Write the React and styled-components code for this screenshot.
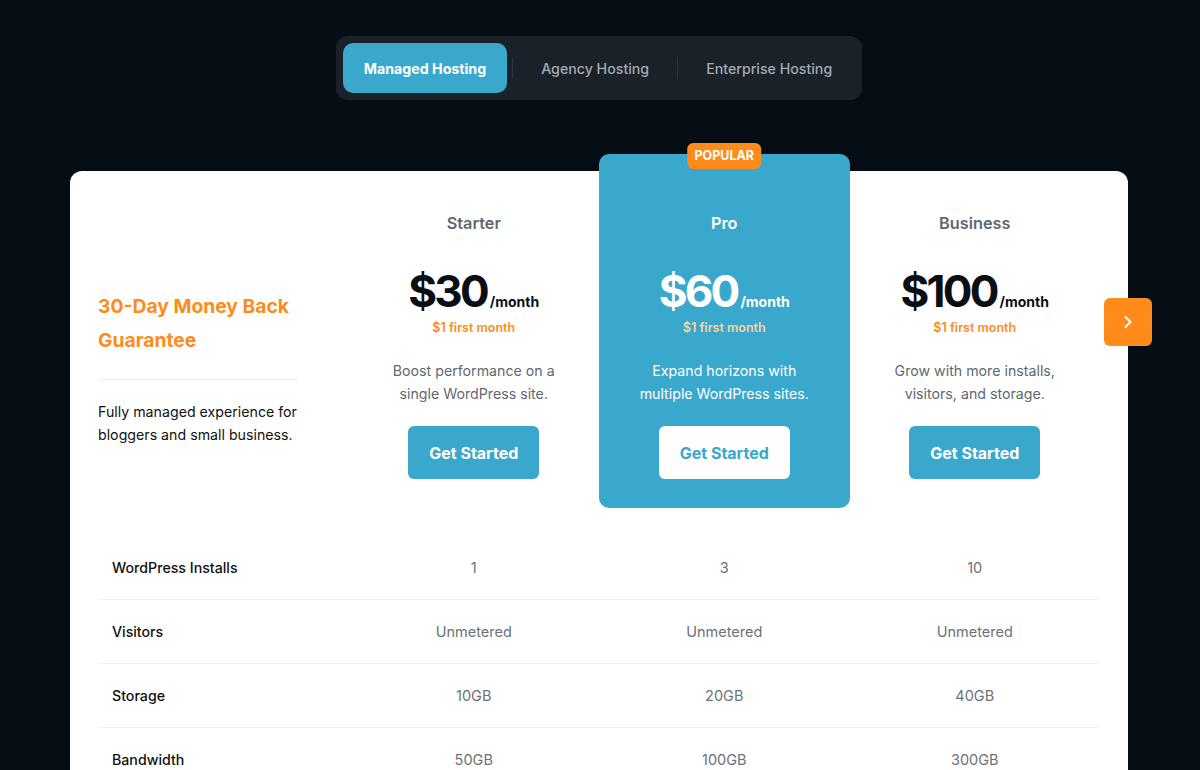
import React from 'react';
import styled, { createGlobalStyle } from 'styled-components';
import { ChevronRight } from 'lucide-react';

const GlobalStyle = createGlobalStyle`
  * { box-sizing: border-box; }
  body {
    margin: 0;
    background: #060e15;
    font-family: Inter, "Noto Sans", sans-serif;
    -webkit-font-smoothing: antialiased;
  }
`;

const Page = styled.div`
  width: 1058px;
  margin-left: 70px;
  padding-top: 36px;
`;

const TabBar = styled.div`
  width: fit-content;
  margin: 0 auto;
  display: flex;
  align-items: center;
  padding: 7px;
  background: #1a2129;
  border-radius: 12px;
`;

const Tab = styled.div`
  height: 50px;
  padding: 0 ${p => (p.$active ? '21px' : '23px')};
  display: flex;
  align-items: center;
  border-radius: 10px;
  font-size: 14.2px;
  font-weight: ${p => (p.$active ? 700 : 500)};
  color: ${p => (p.$active ? '#fff' : '#a3abb3')};
  background: ${p => (p.$active ? '#3aa8cc' : 'transparent')};
`;

const Sep = styled.div`
  width: 1px;
  height: 22px;
  margin: 0 5px;
  background: #2c3540;
`;

const Card = styled.div`
  position: relative;
  margin-top: 71px;
  background: #fff;
  border-radius: 12px;
  padding: 0 28px 40px;
`;

const Header = styled.div`
  display: grid;
  grid-template-columns: repeat(4, 1fr);
`;

const Intro = styled.div`
  padding-top: 118px;
  width: 200px;
`;

const Guarantee = styled.h2`
  margin: 0;
  font-size: 19.3px;
  line-height: 34px;
  font-weight: 700;
  color: #ff8c1a;
`;

const Rule = styled.div`
  height: 1px;
  background: #eeeeee;
  margin: 22px 0 20px;
`;

const IntroText = styled.p`
  margin: 0;
  font-size: 14.2px;
  line-height: 23px;
  color: #111;
  width: 210px;
`;

const Plan = styled.div`
  position: relative;
  display: flex;
  flex-direction: column;
  align-items: center;
  text-align: center;
  padding: 40px 0 29px;
  margin-top: ${p => (p.$featured ? '-17px' : '0')};
  padding-top: ${p => (p.$featured ? '57px' : '40px')};
  background: ${p => (p.$featured ? '#3aa8cc' : 'transparent')};
  border-radius: 10px;
`;

const Badge = styled.div`
  position: absolute;
  top: -11px;
  left: 50%;
  transform: translateX(-50%);
  background: #ff8c1a;
  color: #fff;
  font-size: 12.5px;
  font-weight: 700;
  padding: 0 7px;
  height: 26px;
  line-height: 26px;
  border-radius: 6px;
`;

const PlanName = styled.div`
  font-size: 16.3px;
  line-height: 24px;
  font-weight: 600;
  color: ${p => (p.$featured ? '#fff' : '#5f6870')};
`;

const Price = styled.div`
  margin-top: 34px;
  height: 44px;
  display: flex;
  align-items: baseline;
  color: ${p => (p.$featured ? '#fff' : '#0b0f14')};
`;

const Amount = styled.span`
  font-size: 44px;
  line-height: 44px;
  font-weight: 700;
  letter-spacing: -2.8px;
`;

const Per = styled.span`
  font-size: 14px;
  font-weight: 700;
  margin-left: 3px;
`;

const Promo = styled.div`
  margin-top: 6px;
  font-size: 12.5px;
  line-height: 18px;
  font-weight: 600;
  color: ${p => (p.$featured ? '#fcd2a0' : '#ff8c1a')};
`;

const Desc = styled.p`
  margin: 22px 0 0;
  font-size: 14.2px;
  line-height: 23px;
  color: ${p => (p.$featured ? '#fff' : '#5f6870')};
  width: 200px;
`;

const Button = styled.button`
  margin-top: 21px;
  width: 131px;
  height: 53px;
  border: none;
  border-radius: 6px;
  font-family: inherit;
  font-size: 16px;
  font-weight: 700;
  background: ${p => (p.$featured ? '#fff' : '#3aa8cc')};
  color: ${p => (p.$featured ? '#3aa8cc' : '#fff')};
`;

const NextBtn = styled.div`
  position: absolute;
  top: 127px;
  right: -24px;
  width: 48px;
  height: 48px;
  border-radius: 6px;
  background: #ff8c1a;
  color: #fff;
  display: flex;
  align-items: center;
  justify-content: center;
`;

const Table = styled.div`
  margin-top: 28px;
`;

const Row = styled.div`
  display: grid;
  grid-template-columns: repeat(4, 1fr);
  align-items: center;
  height: 64px;
  border-bottom: 1px solid #f1f1f1;
`;

const Label = styled.div`
  padding-left: 14px;
  font-size: 14.2px;
  font-weight: 500;
  color: #111;
`;

const Value = styled.div`
  text-align: center;
  font-size: 14.5px;
  color: #6b7177;
`;

const plans = [
  { name: 'Starter', price: '$30', desc: 'Boost performance on a single WordPress site.' },
  { name: 'Pro', price: '$60', desc: 'Expand horizons with multiple WordPress sites.', featured: true },
  { name: 'Business', price: '$100', desc: 'Grow with more installs, visitors, and storage.' },
];

const rows = [
  ['WordPress Installs', '1', '3', '10'],
  ['Visitors', 'Unmetered', 'Unmetered', 'Unmetered'],
  ['Storage', '10GB', '20GB', '40GB'],
  ['Bandwidth', '50GB', '100GB', '300GB'],
];

export default function App() {
  return (
    <>
      <GlobalStyle />
      <Page>
        <TabBar>
          <Tab $active>Managed Hosting</Tab>
          <Sep />
          <Tab>Agency Hosting</Tab>
          <Sep />
          <Tab>Enterprise Hosting</Tab>
        </TabBar>

        <Card>
          <Header>
            <Intro>
              <Guarantee>30-Day Money Back Guarantee</Guarantee>
              <Rule />
              <IntroText>Fully managed experience for bloggers and small business.</IntroText>
            </Intro>
            {plans.map(p => (
              <Plan key={p.name} $featured={p.featured}>
                {p.featured && <Badge>POPULAR</Badge>}
                <PlanName $featured={p.featured}>{p.name}</PlanName>
                <Price $featured={p.featured}>
                  <Amount>{p.price}</Amount>
                  <Per>/month</Per>
                </Price>
                <Promo $featured={p.featured}>$1 first month</Promo>
                <Desc $featured={p.featured}>{p.desc}</Desc>
                <Button $featured={p.featured}>Get Started</Button>
              </Plan>
            ))}
          </Header>

          <NextBtn>
            <ChevronRight size={20} strokeWidth={2.5} />
          </NextBtn>

          <Table>
            {rows.map(r => (
              <Row key={r[0]}>
                <Label>{r[0]}</Label>
                <Value>{r[1]}</Value>
                <Value>{r[2]}</Value>
                <Value>{r[3]}</Value>
              </Row>
            ))}
          </Table>
        </Card>
      </Page>
    </>
  );
}
